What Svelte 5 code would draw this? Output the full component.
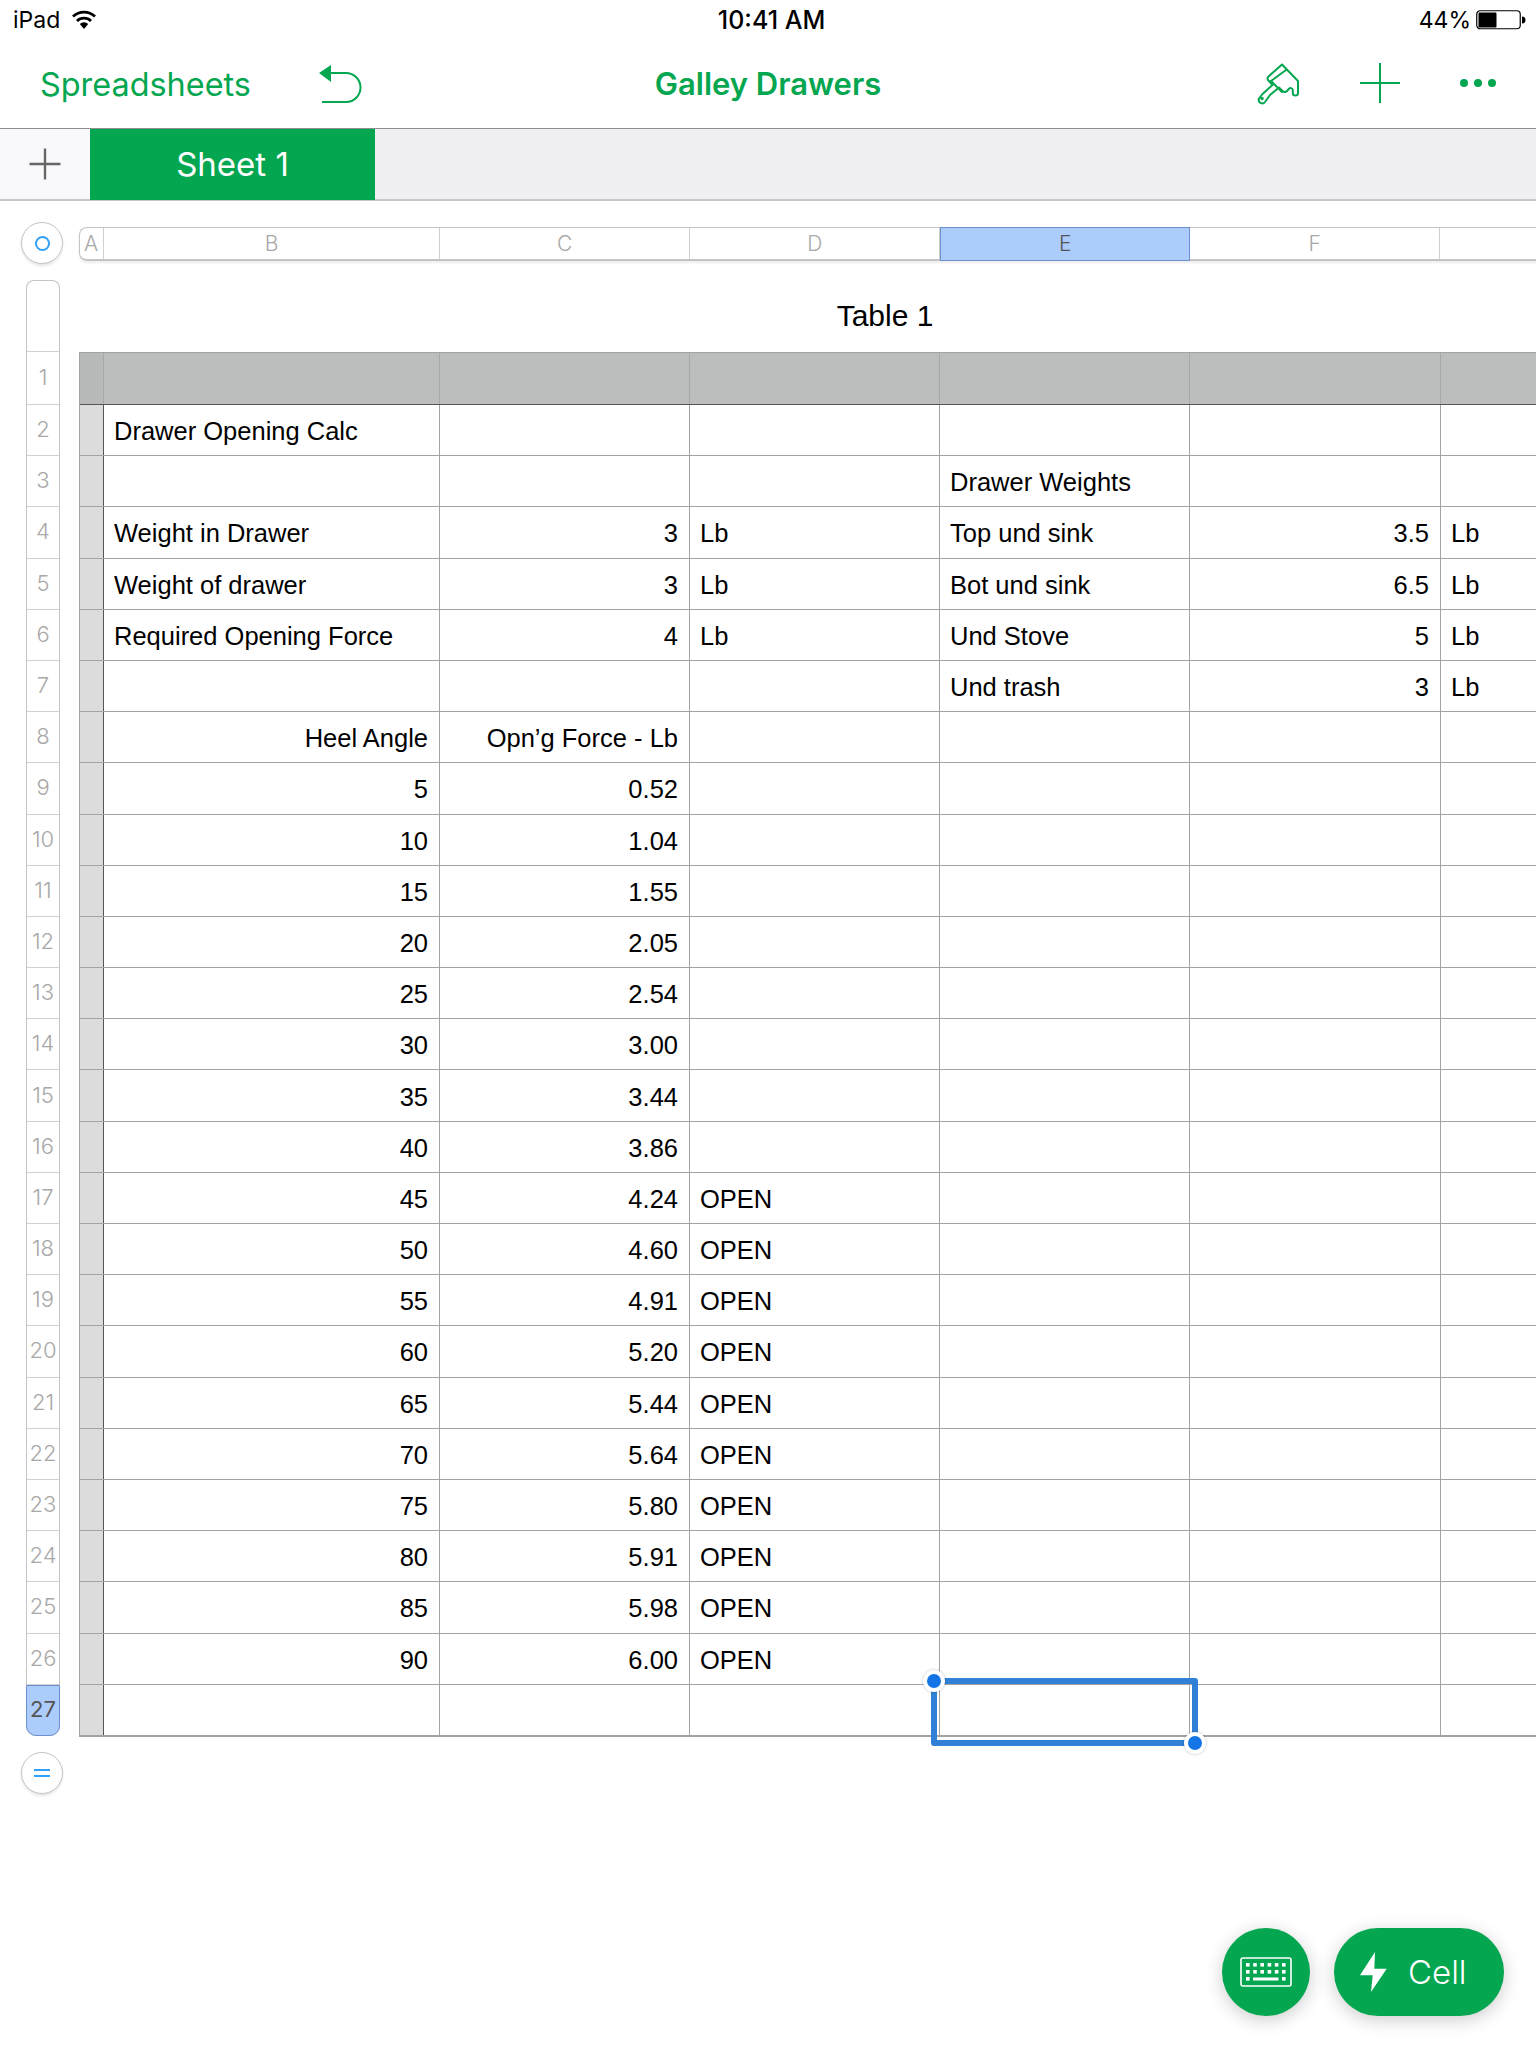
<script>
	const columns = ["A", "B", "C", "D", "E", "F", ""];

	const rows = [
		[],
		["Drawer Opening Calc"],
		["", "", "", "Drawer Weights"],
		["Weight in Drawer", "3", "Lb", "Top und sink", "3.5", "Lb"],
		["Weight of drawer", "3", "Lb", "Bot und sink", "6.5", "Lb"],
		["Required Opening Force", "4", "Lb", "Und Stove", "5", "Lb"],
		["", "", "", "Und trash", "3", "Lb"],
		["Heel Angle", "Opn’g Force - Lb"],
		["5", "0.52"],
		["10", "1.04"],
		["15", "1.55"],
		["20", "2.05"],
		["25", "2.54"],
		["30", "3.00"],
		["35", "3.44"],
		["40", "3.86"],
		["45", "4.24", "OPEN"],
		["50", "4.60", "OPEN"],
		["55", "4.91", "OPEN"],
		["60", "5.20", "OPEN"],
		["65", "5.44", "OPEN"],
		["70", "5.64", "OPEN"],
		["75", "5.80", "OPEN"],
		["80", "5.91", "OPEN"],
		["85", "5.98", "OPEN"],
		["90", "6.00", "OPEN"],
		[]
	];

	// first row's B column holds labels until the heel table starts at row 8
	function alignOf(rowIndex, colIndex) {
		if (colIndex === 0) return rowIndex >= 7 ? "right" : "left";
		if (colIndex === 1 || colIndex === 4) return "right";
		return "left";
	}
</script>

<div class="page">
	<div class="status">
		<div class="status-left">
			<span>iPad</span>
			<svg width="26" height="20" viewBox="0 0 26 20">
				<path d="M13 19 L8.8 14 a6 6 0 0 1 8.4 0 Z" fill="#000" />
				<path d="M6 11 a10 10 0 0 1 14 0" fill="none" stroke="#000" stroke-width="2.8" />
				<path d="M2 6.6 a16 16 0 0 1 22 0" fill="none" stroke="#000" stroke-width="2.8" />
			</svg>
		</div>
		<div class="clock">10:41 AM</div>
		<div class="status-right">
			<span>44%</span>
			<svg width="50" height="20" viewBox="0 0 50 20">
				<rect x="0.75" y="0.75" width="43.5" height="18" rx="3.5" fill="none" stroke="#000" stroke-width="1.2" />
				<rect x="2.5" y="2.5" width="18" height="15" rx="1.2" fill="#000" />
				<path d="M46 6.5 a3.5 3.5 0 0 1 0 7 Z" fill="#000" />
			</svg>
		</div>
	</div>

	<div class="nav">
		<div class="nav-left">
			<span class="back">Spreadsheets</span>
			<svg class="undo" width="44" height="40" viewBox="0 0 44 40">
				<path d="M0 9 L12 1 V18 Z" fill="#04a64f" />
				<path d="M11 9 H27 a14.5 14.5 0 0 1 0 29 H3" fill="none" stroke="#04a64f" stroke-width="2" />
			</svg>
		</div>
		<div class="doc-title">Galley Drawers</div>
		<div class="nav-right">
			<svg width="44" height="42" viewBox="0 0 44 42" fill="none" stroke="#04a64f" stroke-width="2" stroke-linejoin="round" stroke-linecap="round">
				<path d="M25 1.5 L41 18 V30 a2.6 2.6 0 0 1 -5.2 0 V27 a2.2 2.2 0 0 0 -4 -1 L30 28 a3 3 0 0 1 -4.5 0 L22 24.5 L13 32 L8 39 a3.5 3.5 0 0 1 -6 -3.5 L5.5 31 L15.5 22 L11 17 a2.5 2.5 0 0 1 0.5 -3.5 Z" />
				<path d="M14 18 L29 7" />
				<path d="M14 18 L25 29" />
				<circle cx="5" cy="35.5" r="0.8" />
			</svg>
			<svg class="plus" width="42" height="42" viewBox="0 0 42 42">
				<path d="M21 1 V41 M1 21 H41" stroke="#04a64f" stroke-width="2" />
			</svg>
			<div class="dots"><i></i><i></i><i></i></div>
		</div>
	</div>

	<div class="tabs">
		<div class="tab-add">
			<svg width="34" height="34" viewBox="0 0 34 34">
				<path d="M17 1.5 V32.5 M1.5 17 H32.5" stroke="#666" stroke-width="2.4" />
			</svg>
		</div>
		<div class="tab">Sheet 1</div>
	</div>

	<div class="sheet">
		<div class="corner">
			<div class="round-btn"><span class="ring"></span></div>
		</div>
		<div class="col-head">
			{#each columns as c, i}
				<div class="col-label" class:narrow={i === 0} class:sel={c === "E"}>{c}</div>
			{/each}
		</div>

		<div class="row-gutter">
			<div class="row-num blank"></div>
			{#each rows as _, i}
				<div class="row-num" class:sel={i === 26}>{i + 1}</div>
			{/each}
		</div>

		<div class="table-wrap">
			<div class="table-title">Table 1</div>
			<div class="grid">
				{#each rows as row, r}
					<div class="row" class:head={r === 0}>
						<div class="cell gut"></div>
						{#each [0, 1, 2, 3, 4, 5] as c}
							<div class="cell {alignOf(r, c)}">{row[c] ?? ""}</div>
						{/each}
					</div>
				{/each}
			</div>
			<div class="selection">
				<span class="handle tl"></span>
				<span class="handle br"></span>
			</div>
		</div>

		<div class="corner bottom">
			<div class="round-btn eq"><span></span><span></span></div>
		</div>
	</div>

	<div class="actions">
		<div class="fab round">
			<svg width="52" height="30" viewBox="0 0 52 30">
				<rect x="1" y="1" width="50" height="28" rx="2" fill="none" stroke="#fff" stroke-width="1.6" />
				{#each [0, 1, 2, 3, 4, 5] as k}
					<rect x={6 + k * 7.2} y="6" width="3.6" height="3.6" fill="#fff" />
				{/each}
				{#each [0, 1, 2, 3, 4, 5] as k}
					<rect x={6 + k * 7.2} y="13" width="3.6" height="3.6" fill="#fff" />
				{/each}
				<rect x="6" y="20" width="3.6" height="3.6" fill="#fff" />
				<rect x="13" y="20.5" width="25.5" height="3" fill="#fff" />
				<rect x="42" y="20" width="3.6" height="3.6" fill="#fff" />
			</svg>
		</div>
		<div class="fab pill">
			<svg width="28" height="40" viewBox="0 0 28 40">
				<path d="M15 0 L0 23.3 H12.7 L11 40 L26.7 16.7 H14.3 Z" fill="#fff" />
			</svg>
			<span>Cell</span>
		</div>
	</div>
</div>

<style>
	:global(body) {
		margin: 0;
		background: #fff;
	}

	.page {
		position: relative;
		width: 1536px;
		height: 2048px;
		overflow: hidden;
		background: #fff;
		font-family: Inter, "Liberation Sans", sans-serif;
	}

	.status {
		display: grid;
		grid-template-columns: 1fr auto 1fr;
		align-items: center;
		height: 40px;
		padding: 0 10px 0 13px;
		font-size: 23px;
		color: #000;
	}

	.status-left {
		display: flex;
		align-items: center;
		gap: 11px;
	}

	.status-right {
		display: flex;
		align-items: center;
		justify-content: flex-end;
		gap: 5px;
	}

	.clock {
		padding-left: 4px;
		font-size: 25px;
		font-weight: 500;
	}

	.nav {
		display: grid;
		grid-template-columns: 1fr auto 1fr;
		align-items: center;
		height: 89px;
		box-sizing: border-box;
		border-bottom: 1px solid #8e8e90;
		color: #04a64f;
	}

	.nav-left {
		display: flex;
		align-items: center;
		gap: 68px;
		padding-left: 40px;
	}

	.back {
		font-size: 32.4px;
	}

	.doc-title {
		padding-bottom: 2px;
		font-size: 31px;
		font-weight: 600;
	}

	.nav-right {
		display: flex;
		align-items: center;
		justify-content: flex-end;
		padding-right: 40px;
	}

	.plus {
		margin: -2px 0 0 58px;
	}

	.dots {
		display: flex;
		gap: 6px;
		margin: -2px 0 0 59px;
	}

	.dots i {
		width: 8px;
		height: 8px;
		border-radius: 50%;
		background: #04a64f;
	}

	.tabs {
		display: flex;
		height: 72px;
		box-sizing: border-box;
		border-bottom: 2px solid #c8c8ca;
		background: #efeff4;
	}

	.tab-add {
		display: flex;
		align-items: center;
		justify-content: center;
		box-sizing: border-box;
		width: 90px;
		padding-right: 1px;
		background: #f9f9fb;
	}

	.tab {
		display: flex;
		align-items: center;
		justify-content: center;
		box-sizing: border-box;
		width: 285px;
		margin-bottom: -1px;
		padding-bottom: 2px;
		background: #04a64f;
		color: #fff;
		font-size: 33px;
	}

	.sheet {
		display: grid;
		grid-template-columns: 79px 1fr;
		align-items: start;
		padding-top: 21px;
	}

	.corner {
		display: flex;
		justify-content: center;
		padding-left: 5px;
		box-sizing: border-box;
		width: 79px;
	}

	.corner.bottom {
		grid-column: 1;
		padding-top: 15px;
	}

	.round-btn {
		display: flex;
		flex-direction: column;
		align-items: center;
		justify-content: center;
		gap: 4px;
		box-sizing: border-box;
		width: 42px;
		height: 42px;
		border-radius: 50%;
		background: #fff;
		border: 1px solid #c4c4c4;
		box-shadow: 0 2px 3px rgba(0, 0, 0, 0.1);
	}

	.ring {
		box-sizing: border-box;
		width: 15px;
		height: 15px;
		border: 2.5px solid #30a0f8;
		border-radius: 50%;
	}

	.eq span {
		width: 16px;
		height: 2px;
		background: #30a0f8;
	}

	.col-head {
		display: flex;
		height: 34px;
		margin-top: 5px;
		box-sizing: border-box;
		border: 1px solid #c4c4c4;
		border-bottom-width: 2px;
		border-right: 0;
		border-radius: 8px 0 0 8px;
		box-shadow: 0 2px 3px rgba(0, 0, 0, 0.08);
		font-size: 21px;
		font-weight: 300;
		color: #a8a8a8;
	}

	.col-label {
		display: flex;
		align-items: center;
		justify-content: center;
		flex: none;
		box-sizing: border-box;
		width: 250.2px;
		border-right: 1px solid #cfcfcf;
	}

	.col-label.narrow {
		width: 24px;
		padding-right: 1px;
	}

	.col-label:first-child + .col-label {
		width: 336px;
	}

	.col-label.sel {
		width: 249.8px;
		margin: -1px 0 -2px;
		padding-bottom: 1px;
		border: 1px solid #6c8fd0;
		background: #acccfc;
		color: #555;
	}

	.row-gutter {
		grid-column: 1;
		grid-row: 2;
		display: flex;
		flex-direction: column;
		box-sizing: border-box;
		width: 34px;
		margin: 16px 0 0 26px;
		border: 1px solid #c4c4c4;
		border-bottom: 0;
		border-radius: 8px 8px 10px 10px;
		font-size: 22px;
		font-weight: 300;
		color: #a8a8a8;
	}

	.row-num {
		display: flex;
		align-items: center;
		justify-content: center;
		flex: none;
		height: 51.2px;
		box-sizing: border-box;
		padding-bottom: 2px;
		border-bottom: 1px solid #d0d0d0;
	}

	.row-num.blank {
		height: 71px;
	}

	.row-num:nth-child(2) {
		height: 53px;
	}

	.row-num.sel {
		margin: 0 -1px;
		border: 1px solid #6c8fd0;
		border-radius: 0 0 10px 10px;
		background: #acccfc;
		font-weight: 400;
		color: #555;
	}

	.table-wrap {
		grid-column: 2;
		grid-row: 2;
		position: relative;
		min-width: 0;
		margin-top: 16px;
	}

	.table-title {
		display: flex;
		align-items: center;
		justify-content: center;
		height: 72px;
		width: 1612px;
		font-family: "Liberation Sans", sans-serif;
		font-size: 30px;
		color: #000;
	}

	.grid {
		box-sizing: border-box;
		width: 1457px;
		border-left: 1px solid #a3a3a3;
		border-bottom: 1px solid #a3a3a3;
		font-family: "Liberation Sans", sans-serif;
		font-size: 25.5px;
		color: #000;
	}

	.row {
		display: grid;
		grid-template-columns: 24px 336px 250px 250px 250px 251px 250px;
		height: 51.2px;
		box-sizing: border-box;
		border-bottom: 1px solid #a3a3a3;
	}

	.row.head {
		height: 53px;
		border-top: 1px solid #a3a3a3;
		border-bottom-color: #555;
		background: #bcbebd;
	}

	.cell {
		display: flex;
		align-items: center;
		min-width: 0;
		box-sizing: border-box;
		padding: 3px 11px 0 10px;
		border-right: 1px solid #a3a3a3;
		white-space: nowrap;
	}

	.cell.right {
		justify-content: flex-end;
	}

	.cell.gut {
		padding: 0;
		border-right-color: #555;
		background: #dcdcdc;
	}

	.row.head .cell {
		border-right-color: #a8a8a8;
	}

	.row.head .cell.gut {
		background: #b8bab9;
	}

	.selection {
		position: absolute;
		left: 852px;
		top: 1398px;
		box-sizing: border-box;
		width: 267px;
		height: 68px;
		border: 6px solid #2f80d6;
		border-radius: 3px;
	}

	.handle {
		position: absolute;
		width: 14px;
		height: 14px;
		border: 4px solid #fff;
		border-radius: 50%;
		background: #1574e6;
		box-shadow: 0 0 3px rgba(0, 0, 0, 0.25);
	}

	.handle.tl {
		left: -14px;
		top: -14px;
	}

	.handle.br {
		right: -14px;
		bottom: -14px;
	}

	.actions {
		position: absolute;
		right: 32px;
		bottom: 32px;
		display: flex;
		gap: 24px;
	}

	.fab {
		display: flex;
		align-items: center;
		justify-content: center;
		height: 88px;
		background: #04a64f;
		color: #fff;
		box-shadow: 0 4px 18px rgba(0, 0, 0, 0.2);
	}

	.fab.round {
		width: 88px;
		border-radius: 50%;
	}

	.fab.pill {
		justify-content: flex-start;
		gap: 20px;
		box-sizing: border-box;
		width: 170px;
		padding-left: 26px;
		border-radius: 44px;
		font-size: 33px;
		font-weight: 300;
	}
</style>
